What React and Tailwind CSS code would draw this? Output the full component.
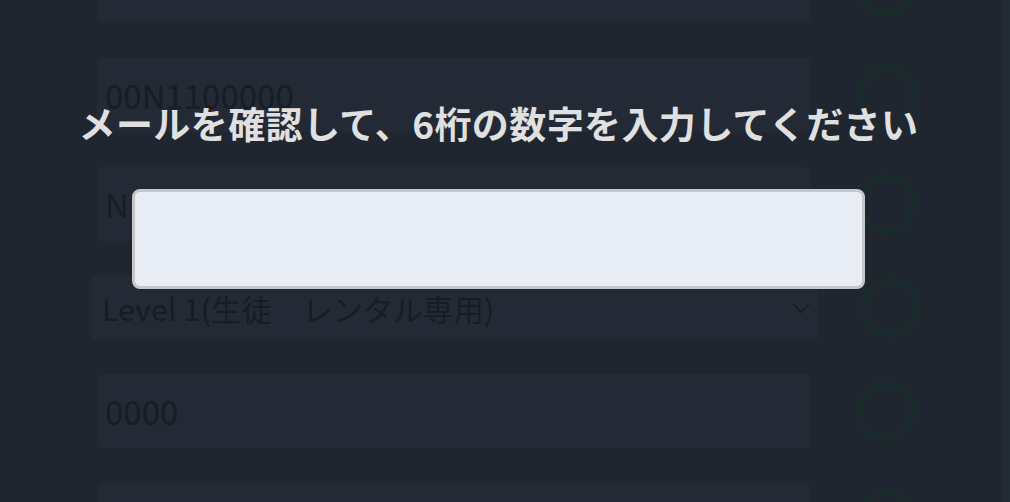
const fields = [
    { value: "", kind: "input" },
    { value: "00N1100000", kind: "input" },
    { value: "N", kind: "input" },
    { value: "Level 1(生徒　レンタル専用)", kind: "select" },
    { value: "0000", kind: "input" },
    { value: "", kind: "input" },
];

function StatusRing({ className = "" }) {
    return (
        <div
            className={`h-[60px] w-[60px] shrink-0 rounded-full border-[6px] border-[#1b2a2b] ${className}`}
        />
    );
}

function FieldRow({ field }) {
    if (field.kind === "select") {
        return (
            <div className="flex h-[63px] shrink-0 items-center">
                <div className="ml-[92px] flex h-full w-[725px] shrink-0 items-center justify-between bg-[#232a35] pl-[10px] pr-[7px]">
                    <span className="whitespace-pre text-[30px] leading-none tracking-[0.3px] text-[#171c25]">
                        {field.value}
                    </span>
                    <svg
                        width="18"
                        height="12"
                        viewBox="0 0 18 12"
                        fill="none"
                        stroke="#171c25"
                        strokeWidth="1.6"
                    >
                        <path d="M1 2l8 8 8-8" />
                    </svg>
                </div>
                <StatusRing className="ml-[43px]" />
            </div>
        );
    }
    return (
        <div className="flex h-[74px] shrink-0 items-center">
            <div className="ml-[97px] flex h-full w-[714px] shrink-0 items-center rounded-md bg-[#232a35] px-2">
                <span className="text-[33px] leading-none text-[#171c25]">
                    {field.value}
                </span>
            </div>
            <StatusRing className="ml-[46px]" />
        </div>
    );
}

export default function App() {
    return (
        <div
            className="relative h-[502px] w-[1010px] overflow-hidden bg-[#1f2630]"
            style={{ fontFamily: '"Noto Sans CJK JP", "Noto Sans", sans-serif' }}
        >
            <div className="flex h-full">
                <div className="mt-[-51px] flex flex-1 flex-col gap-[35px]">
                    {fields.map((field, i) => (
                        <FieldRow key={i} field={field} />
                    ))}
                </div>
                <div className="h-full w-[8px] bg-[#222a34]" />
            </div>

            {/* verification modal */}
            <div className="absolute left-0 top-0 flex w-[997px] flex-col items-center pt-[99px]">
                <h2 className="text-[37px] font-bold leading-[48px] tracking-[0.4px] text-[#e0e0e0]">
                    メールを確認して、6桁の数字を入力してください
                </h2>
                <input
                    type="text"
                    className="mt-[42px] h-[100px] w-[733px] rounded-lg border-[3px] border-[#c6c7c9] bg-[#e8ecf4] px-4 text-[33px] text-[#1f2630] outline-none"
                />
            </div>
        </div>
    );
}
